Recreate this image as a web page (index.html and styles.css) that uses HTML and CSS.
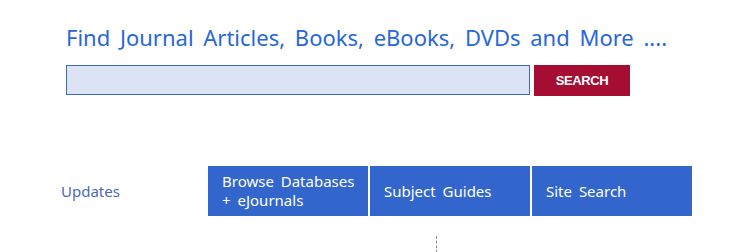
FILE: index.html
```html
<!DOCTYPE html>
<html lang="en">
<head>
<meta charset="UTF-8" />
<meta name="viewport" content="width=device-width, initial-scale=1" />
<title>Library Search</title>
<link rel="stylesheet" href="styles.css">
</head>
<body>
  <div class="search-box">
    <h1>Find Journal Articles, Books, eBooks, DVDs and More ....</h1>
    <form class="search-row" onsubmit="return false">
      <input type="text" class="search-input" aria-label="Search" />
      <button type="submit" class="search-btn">SEARCH</button>
    </form>
  </div>

  <div class="nav-row">
    <a class="updates" href="#">Updates</a>
    <a class="tab" href="#">Browse Databases<br>+ eJournals</a>
    <a class="tab" href="#">Subject Guides</a>
    <a class="tab" href="#">Site Search</a>
  </div>

  <div class="divider"></div>
</body>
</html>
```

FILE: styles.css
```css
body {
  margin: 0;
  font-family: "Noto Sans", "Open Sans", sans-serif;
  background: #ffffff;
}
.search-box {
  padding: 20px 0 0 66px;
}
h1 {
  margin: 0;
  font-size: 22px;
  font-weight: 400;
  line-height: 34px;
  color: #2767da;
  word-spacing: 4px;
}
.search-row {
  display: flex;
  gap: 4px;
  margin-top: 11px;
}
.search-input {
  width: 464px;
  height: 30px;
  box-sizing: border-box;
  border: 1px solid #3d6bbf;
  background: #dce3f4;
  margin: 0;
  padding: 0 8px;
}
.search-btn {
  width: 96px;
  height: 31px;
  border: none;
  background: #a50d33;
  color: #fff;
  font-family: "Liberation Sans", Arial, sans-serif;
  font-size: 13px;
  font-weight: 700;
  letter-spacing: -0.4px;
  cursor: pointer;
}
.nav-row {
  display: flex;
  gap: 2px;
  margin-top: 70px;
  padding-left: 61px;
}
.updates {
  width: 145px;
  display: flex;
  align-items: center;
  font-size: 15px;
  color: #4a6ab8;
  text-decoration: none;
}
.tab {
  width: 160px;
  height: 50px;
  box-sizing: border-box;
  padding: 0 14px;
  display: flex;
  align-items: center;
  background: #3366cc;
  color: #fff;
  font-size: 15px;
  line-height: 19px;
  text-decoration: none;
  white-space: nowrap;
  word-spacing: 3px;
}
.divider {
  width: 0;
  height: 17px;
  margin: 20px 0 0 436px;
  border-left: 1px dashed #8a8a8a;
}
```
